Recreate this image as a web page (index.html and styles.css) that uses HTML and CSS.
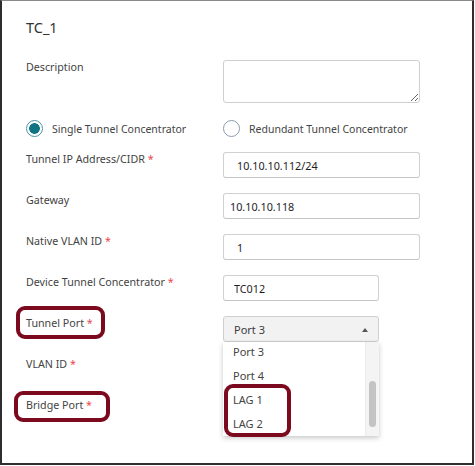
FILE: index.html
```html
<!DOCTYPE html>
<html lang="en">
<head>
    <meta charset="UTF-8">
    <meta name="viewport" content="width=device-width, initial-scale=1.0">
    <title>TC_1</title>
    <link rel="stylesheet" href="styles.css">
</head>
<body>
<div class="frame">
    <h1 class="title">TC_1</h1>

    <form class="form">
        <div class="row">
            <label class="label" for="desc">Description</label>
            <textarea class="area" id="desc"></textarea>
        </div>

        <div class="radios">
            <label class="radio"><span class="dot on"></span>Single Tunnel Concentrator</label>
            <label class="radio"><span class="dot"></span>Redundant Tunnel Concentrator</label>
        </div>

        <div class="row">
            <label class="label" for="ip">Tunnel IP Address/CIDR <span class="req">*</span></label>
            <input class="field pad-ip" id="ip" type="text" value="10.10.10.112/24">
        </div>

        <div class="row">
            <label class="label" for="gw">Gateway</label>
            <input class="field pad-gw" id="gw" type="text" value="10.10.10.118">
        </div>

        <div class="row">
            <label class="label" for="vlan">Native VLAN ID <span class="req">*</span></label>
            <input class="field pad-ip" id="vlan" type="text" value="1">
        </div>

        <div class="row">
            <label class="label" for="dtc">Device Tunnel Concentrator <span class="req">*</span></label>
            <input class="field short" id="dtc" type="text" value="TC012">
        </div>

        <div class="row">
            <label class="label"><span class="ring ring-tunnel">Tunnel Port <span class="req">*</span></span></label>
            <div class="select-wrap">
                <div class="select">Port 3 <span class="caret"></span></div>
                <ul class="menu">
                    <li class="opt">Port 3</li>
                    <li class="opt">Port 4</li>
                    <li class="opt-group">
                        <div class="opt">LAG 1</div>
                        <div class="opt">LAG 2</div>
                    </li>
                    <li class="track"><span class="thumb"></span></li>
                </ul>
            </div>
        </div>

        <div class="row">
            <label class="label">VLAN ID <span class="req">*</span></label>
            <input class="field short" type="text" value="">
        </div>

        <div class="row">
            <label class="label"><span class="ring ring-bridge">Bridge Port <span class="req">*</span></span></label>
            <div class="select"><span class="caret down"></span></div>
        </div>
    </form>
</div>
</body>
</html>
```

FILE: styles.css
```css
body {
    margin: 0;
    background: #fff;
    color: #434343;
    font-family: "Noto Sans", "Open Sans", sans-serif;
}

.frame {
    box-sizing: border-box;
    width: 474px;
    height: 465px;
    border: 2px solid #2e2e2e;
    border-top: 1px solid #8a8a8a;
    padding-left: 24px;
    overflow: hidden;
}

.title {
    margin: 16px 0 0;
    font-size: 14.5px;
    font-weight: 400;
    line-height: 20px;
    color: #333;
}

.form {
    margin-top: 23px;
    display: flex;
    flex-direction: column;
    gap: 15px;
}

.row,
.radios {
    display: grid;
    grid-template-columns: 197px 197px;
    align-items: start;
}

.radios {
    margin-top: 2px;
}

.label {
    font-size: 10.7px;
    line-height: 14px;
}

.req {
    color: #e8474c;
}

/* radio buttons */
.radio {
    display: flex;
    align-items: center;
    gap: 9px;
    height: 17px;
    font-size: 10.5px;
}

.dot {
    box-sizing: border-box;
    flex: none;
    width: 17px;
    height: 17px;
    border-radius: 50%;
    border: 1.5px solid #8d9cb0;
    background: #fff;
}

.dot.on {
    border: 1.5px solid #4b95a3;
    background: radial-gradient(circle, #0f7484 0 5px, #fff 5.6px);
}

/* inputs */
.area {
    box-sizing: border-box;
    width: 197px;
    height: 43px;
    margin: 0;
    border: 1px solid #cfcfcf;
    border-radius: 3px;
    resize: both;
}

.field {
    box-sizing: border-box;
    width: 197px;
    height: 26px;
    margin: 0;
    padding: 1px 10px 0;
    border: 1px solid #d0d0d0;
    border-bottom-color: #c4c4c4;
    border-radius: 3px;
    font-family: "Noto Sans", sans-serif;
    font-size: 10.8px;
    color: #1e1e1e;
}

.field.short {
    width: 156px;
}

.pad-ip {
    padding-left: 13px;
}

.pad-gw {
    padding-left: 6px;
}

/* select + open menu */
.select-wrap {
    position: relative;
}

.select {
    box-sizing: border-box;
    width: 156px;
    height: 26px;
    padding: 1px 10px 0;
    display: flex;
    align-items: center;
    justify-content: space-between;
    background: #f2f2f2;
    border: 1px solid #cfcfcf;
    border-radius: 3px;
    font-size: 11px;
    color: #3c3c3c;
}

.caret {
    width: 0;
    height: 0;
    margin-left: auto;
    border-left: 3.5px solid transparent;
    border-right: 3.5px solid transparent;
    border-bottom: 4px solid #555;
}

.caret.down {
    border-bottom: 0;
    border-top: 4px solid #555;
}

.menu {
    position: absolute;
    z-index: 2;
    top: 26px;
    left: 0;
    width: 156px;
    height: 94px;
    margin: 0;
    padding: 0;
    list-style: none;
    background: #fff;
    box-shadow: 0 2px 5px rgba(0, 0, 0, 0.22);
}

.opt {
    height: 24px;
    padding-left: 10px;
    line-height: 24px;
    font-size: 11px;
    color: #444;
}

.opt:first-child {
    height: 22px;
    line-height: 20px;
}

.opt-group {
    position: relative;
}

.opt-group::after {
    content: "";
    position: absolute;
    left: 1px;
    top: -4px;
    width: 67px;
    bottom: -1px;
    box-sizing: border-box;
    border: 4px solid #7b0a1f;
    border-radius: 9px;
}

.opt-group .opt {
    height: 24px;
    line-height: 24px;
}

.track {
    position: absolute;
    top: 0;
    right: 0;
    width: 13px;
    height: 100%;
    background: #f4f4f4;
    border-left: 1px solid #ececec;
}

.thumb {
    position: absolute;
    left: 3px;
    top: 39px;
    width: 7px;
    height: 46px;
    border-radius: 4px;
    background: #c3c3c3;
}

/* red annotation rings */
.ring {
    position: relative;
    display: inline-block;
}

.ring::after {
    content: "";
    position: absolute;
    border: 4px solid #7b0a1f;
    border-radius: 9px;
}

.ring-tunnel::after {
    left: -10px;
    top: -10px;
    right: -12px;
    bottom: -9px;
}

.ring-bridge::after {
    left: -12px;
    top: -7px;
    right: -18px;
    bottom: -10px;
}
```
